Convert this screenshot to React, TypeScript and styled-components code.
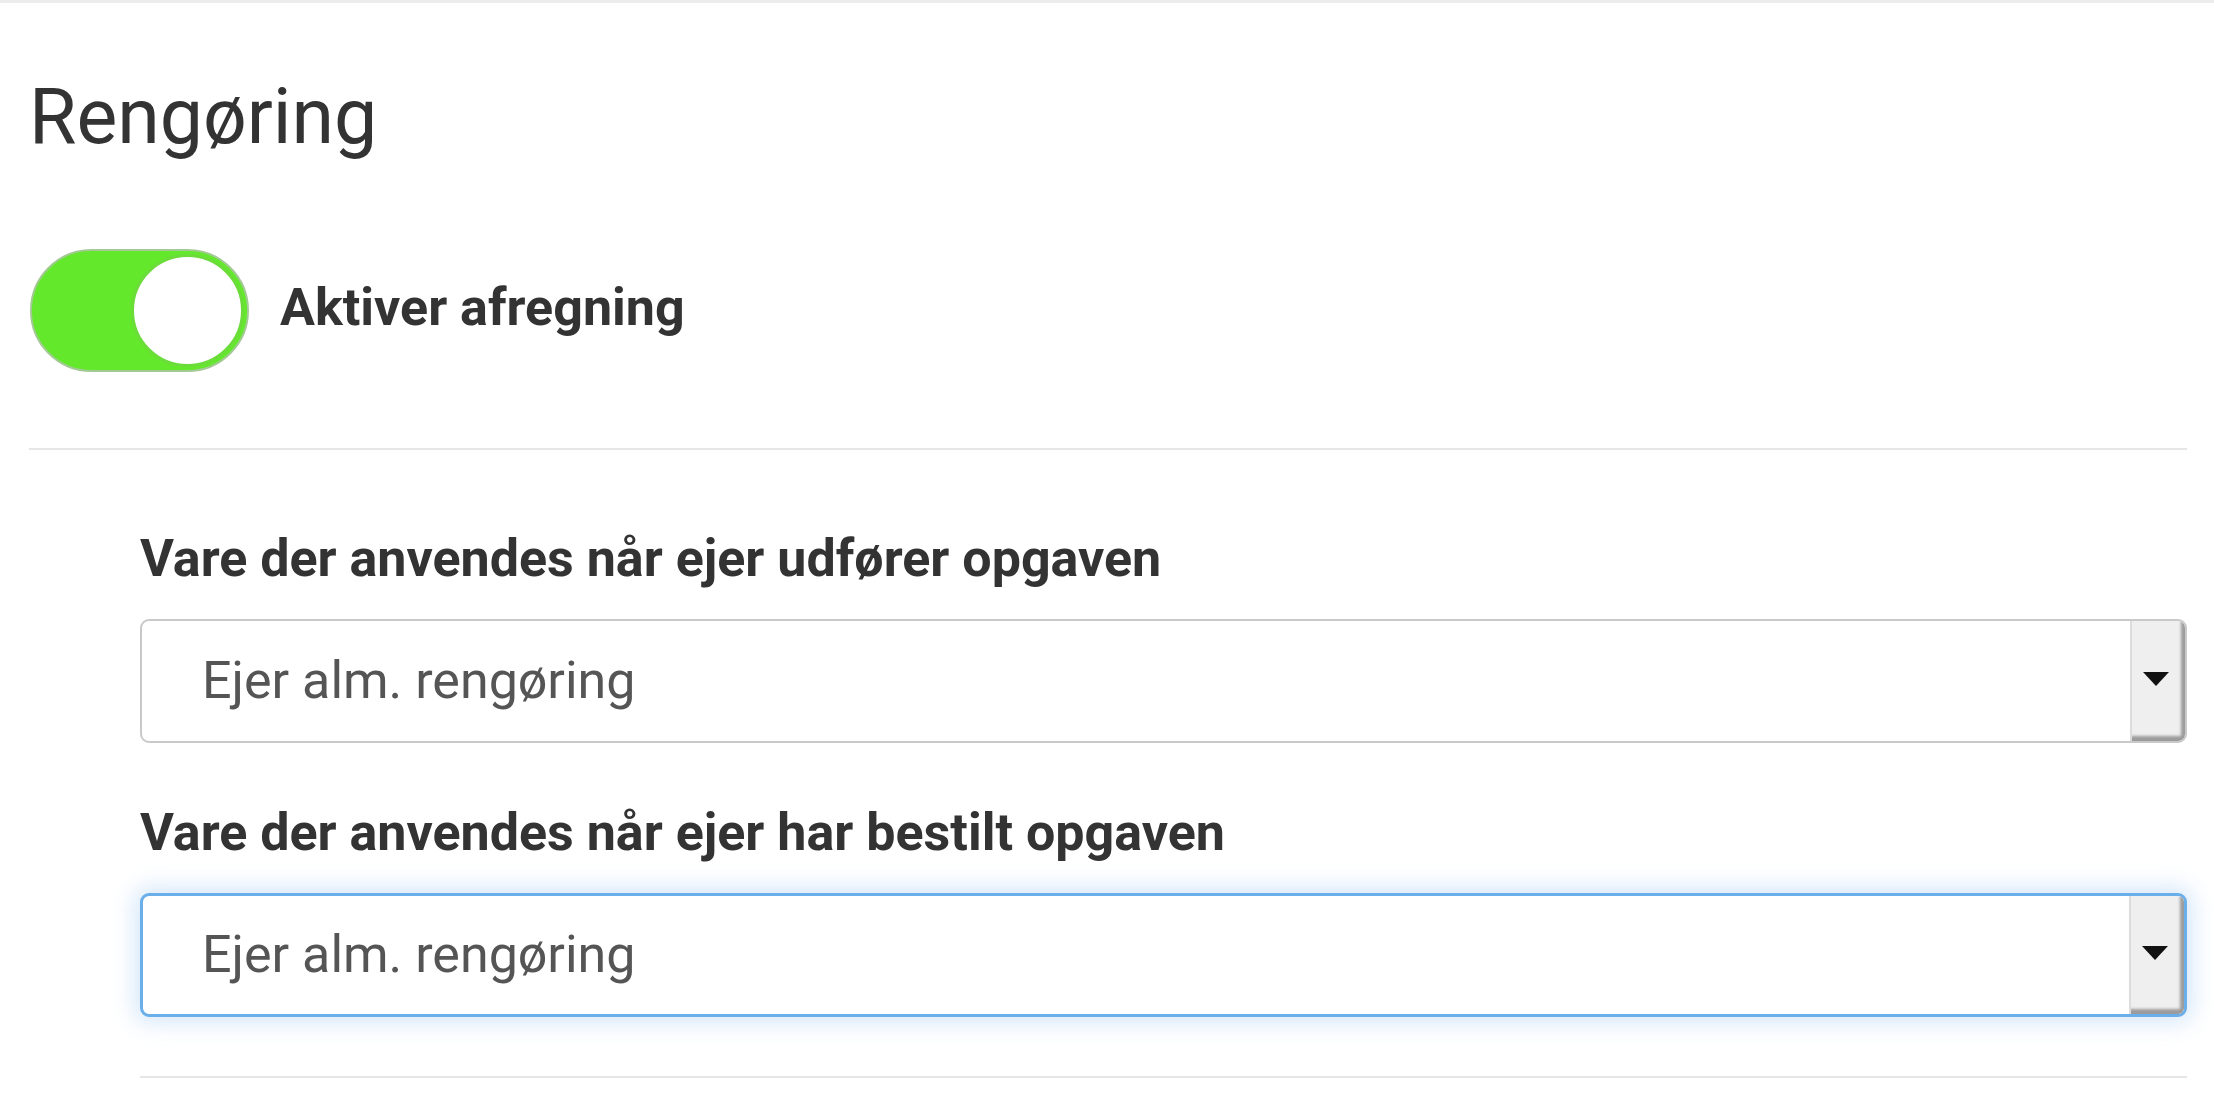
import React from "react";
import styled, { createGlobalStyle } from "styled-components";

const GlobalStyle = createGlobalStyle`
  html, body {
    margin: 0;
    padding: 0;
    background: #ffffff;
  }
  body {
    font-family: Roboto, "Liberation Sans", Arial, sans-serif;
    color: #333333;
  }
`;

const Page = styled.div`
  border-top: 3px solid #ececec;
  padding: 0 27px 0 29px;
  box-sizing: border-box;
  width: 2214px;
`;

const Title = styled.h1`
  margin: 69px 0 0 0;
  font-size: 77px;
  font-weight: 400;
  line-height: 90px;
  color: #333333;
`;

const ToggleRow = styled.div`
  display: flex;
  align-items: center;
  gap: 31px;
  margin-top: 87px;
  padding-left: 1px;
`;

const Track = styled.div<{ $on: boolean }>`
  position: relative;
  width: 219px;
  height: 123px;
  box-sizing: border-box;
  border-radius: 62px;
  background: ${(p) => (p.$on ? "#63e82b" : "#e6e6e6")};
  border: 2px solid ${(p) => (p.$on ? "#a3c994" : "#cccccc")};
  flex-shrink: 0;
`;

const Knob = styled.div<{ $on: boolean }>`
  position: absolute;
  top: 3px;
  ${(p) => (p.$on ? "right: 3px;" : "left: 3px;")}
  width: 113px;
  height: 113px;
  box-sizing: border-box;
  border-radius: 50%;
  background: #ffffff;
  border: 3px solid #6bdc3a;
`;

const ToggleLabel = styled.span`
  font-size: 52px;
  font-weight: 700;
  color: #333333;
  margin-top: -6px;
`;

const Divider = styled.hr<{ $indent?: boolean }>`
  border: none;
  height: 2px;
  background: #e6e6e6;
  margin: 0;
  margin-left: ${(p) => (p.$indent ? "111px" : "0")};
`;

const TopDivider = styled(Divider)`
  margin-top: 76px;
`;

const Fields = styled.div`
  display: flex;
  flex-direction: column;
  padding-left: 111px;
  padding-top: 78px;
`;

const Field = styled.div`
  display: flex;
  flex-direction: column;
  gap: 30px;
  margin-bottom: 59px;
`;

const FieldLabel = styled.label`
  font-size: 52px;
  font-weight: 700;
  line-height: 61px;
  color: #333333;
`;

const SelectBox = styled.div<{ $focused?: boolean }>`
  display: flex;
  align-items: stretch;
  height: 124px;
  box-sizing: border-box;
  border: ${(p) => (p.$focused ? "3px solid #6aaeea" : "2px solid #c9c9c9")};
  border-radius: 9px;
  background: #ffffff;
  overflow: hidden;
  box-shadow: ${(p) =>
    p.$focused ? "0 0 22px 6px rgba(130, 185, 240, 0.32)" : "none"};
`;

const SelectValue = styled.div<{ $focused?: boolean }>`
  flex: 1;
  display: flex;
  align-items: center;
  padding-left: ${(p) => (p.$focused ? "59px" : "60px")};
  font-size: 52px;
  color: #555555;
  padding-bottom: 1px;
`;

const DropButton = styled.div`
  width: 55px;
  display: flex;
  align-items: center;
  justify-content: center;
  background: #efefef;
  border-left: 2px solid #dcdcdc;
  box-sizing: border-box;
  padding-right: 6px;
  padding-bottom: 4px;
  box-shadow: inset -7px -8px 3px -3px #9b9b9b;
`;

const Arrow = styled.span`
  width: 0;
  height: 0;
  border-left: 13px solid transparent;
  border-right: 13px solid transparent;
  border-top: 14px solid #111111;
`;

function Select({ value, focused }: { value: string; focused?: boolean }) {
  return (
    <SelectBox $focused={focused}>
      <SelectValue $focused={focused}>{value}</SelectValue>
      <DropButton>
        <Arrow />
      </DropButton>
    </SelectBox>
  );
}

export default function App() {
  return (
    <>
      <GlobalStyle />
      <Page>
        <Title>Rengøring</Title>
        <ToggleRow>
          <Track $on>
            <Knob $on />
          </Track>
          <ToggleLabel>Aktiver afregning</ToggleLabel>
        </ToggleRow>
        <TopDivider />
        <Fields>
          <Field>
            <FieldLabel>Vare der anvendes når ejer udfører opgaven</FieldLabel>
            <Select value="Ejer alm. rengøring" />
          </Field>
          <Field>
            <FieldLabel>Vare der anvendes når ejer har bestilt opgaven</FieldLabel>
            <Select value="Ejer alm. rengøring" focused />
          </Field>
        </Fields>
        <Divider $indent />
      </Page>
    </>
  );
}
